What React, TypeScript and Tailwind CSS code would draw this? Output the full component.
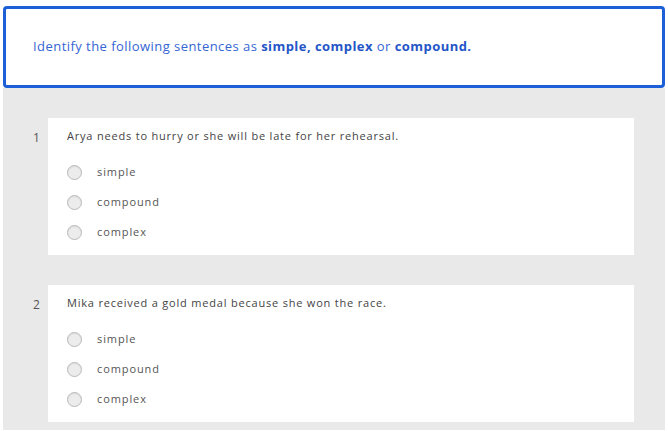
const questions = [
  { n: 1, text: "Arya needs to hurry or she will be late for her rehearsal." },
  { n: 2, text: "Mika received a gold medal because she won the race." },
];

const options = ["simple", "compound", "complex"];

function Radio() {
  return (
    <span className="block w-[15px] h-[15px] rounded-full border border-[#b9b9b9] bg-[#ececec] shadow-[inset_0_1px_1px_rgba(0,0,0,0.08)]"></span>
  );
}

function Question({ n, text }: { n: number; text: string }) {
  return (
    <div className="flex">
      <div className="w-[45px] pl-[30px] pt-[13px] text-[12px] leading-[14px] text-[#555]">
        {n}
      </div>
      <div className="w-[586px] h-[137px] bg-white pt-[11px] pl-[19px]">
        <p className="text-[11px] leading-[14px] tracking-[0.8px] text-[#444]">
          {text}
        </p>
        <div className="mt-[14px] flex flex-col">
          {options.map((o) => (
            <label key={o} className="h-[30px] flex items-center">
              <Radio />
              <span className="ml-[15px] text-[11px] tracking-[0.9px] text-[#555]">
                {o}
              </span>
            </label>
          ))}
        </div>
      </div>
    </div>
  );
}

export default function App() {
  return (
    <div className="w-[668px] h-[431px] bg-white font-['Open_Sans',sans-serif]">
      {/* Instrucciones */}
      <div className="mx-[3px] pt-[6px]">
        <div className="h-[82px] border-[3px] border-[#1d5fd6] rounded-[4px] flex items-center pl-[27px]">
          <p className="text-[13px] text-[#3565d4] tracking-[0.45px]">
            Identify the following sentences as{" "}
            <b className="font-bold text-[#2455c8]">simple, complex</b> or{" "}
            <b className="font-bold text-[#2455c8]">compound.</b>
          </p>
        </div>
      </div>

      {/* Preguntas */}
      <div className="mx-[3px] bg-[#e9e9e9] pt-[30px] h-[342px] flex flex-col gap-[30px]">
        {questions.map((q) => (
          <Question key={q.n} n={q.n} text={q.text} />
        ))}
      </div>
    </div>
  );
}
